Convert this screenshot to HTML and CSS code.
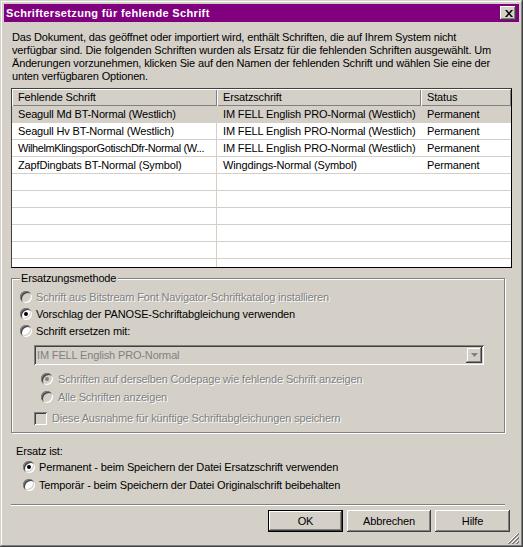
FILE: index.html
```html
<!doctype html>
<html lang="de">
  <head>
    <meta charset="UTF-8" />
    <title>Schriftersetzung für fehlende Schrift</title>
    <link rel="stylesheet" href="styles.css">
  </head>
  <body>
    <div class="window">
      <div class="titlebar">
        <span class="title">Schriftersetzung für fehlende Schrift</span>
        <div class="close">
          <svg width="8" height="7" viewBox="0 0 8 7">
            <path d="M0 0h2l2 2.5 2-2.5h2l-3 3.5 3 3.5h-2l-2-2.5-2 2.5h-2l3-3.5z" fill="#000" />
          </svg>
        </div>
      </div>

      <div class="content">
        <p class="intro">
          Das Dokument, das geöffnet oder importiert wird, enthält Schriften, die auf Ihrem System nicht<br>
          verfügbar sind. Die folgenden Schriften wurden als Ersatz für die fehlenden Schriften ausgewählt. Um<br>
          Änderungen vorzunehmen, klicken Sie auf den Namen der fehlenden Schrift und wählen Sie eine der<br>
          unten verfügbaren Optionen.
        </p>

        <div class="list">
          <div class="row head">
            <div class="cell">Fehlende Schrift</div>
            <div class="cell">Ersatzschrift</div>
            <div class="cell">Status</div>
          </div>
          <div class="row selected">
            <div class="cell">Seagull Md BT-Normal (Westlich)</div>
            <div class="cell">IM FELL English PRO-Normal (Westlich)</div>
            <div class="cell">Permanent</div>
          </div>
          <div class="row">
            <div class="cell">Seagull Hv BT-Normal (Westlich)</div>
            <div class="cell">IM FELL English PRO-Normal (Westlich)</div>
            <div class="cell">Permanent</div>
          </div>
          <div class="row">
            <div class="cell tight">WilhelmKlingsporGotischDfr-Normal (W...</div>
            <div class="cell">IM FELL English PRO-Normal (Westlich)</div>
            <div class="cell">Permanent</div>
          </div>
          <div class="row">
            <div class="cell">ZapfDingbats BT-Normal (Symbol)</div>
            <div class="cell">Wingdings-Normal (Symbol)</div>
            <div class="cell">Permanent</div>
          </div>
          <div class="row"><div class="cell"></div><div class="cell"></div><div class="cell"></div></div>
          <div class="row"><div class="cell"></div><div class="cell"></div><div class="cell"></div></div>
          <div class="row"><div class="cell"></div><div class="cell"></div><div class="cell"></div></div>
          <div class="row"><div class="cell"></div><div class="cell"></div><div class="cell"></div></div>
          <div class="row"><div class="cell"></div><div class="cell"></div><div class="cell"></div></div>
          <div class="row"><div class="cell"></div><div class="cell"></div><div class="cell"></div></div>
        </div>

        <fieldset class="group">
          <legend>Ersatzungsmethode</legend>
          <div class="option disabled">
            <span class="radio"></span>
            <span class="label">Schrift aus Bitstream Font Navigator-Schriftkatalog installieren</span>
          </div>
          <div class="option">
            <span class="radio"><span class="dot"></span></span>
            <span class="label">Vorschlag der PANOSE-Schriftabgleichung verwenden</span>
          </div>
          <div class="option">
            <span class="radio"></span>
            <span class="label">Schrift ersetzen mit:</span>
          </div>

          <div class="combo">
            <span class="combo-text">IM FELL English PRO-Normal</span>
            <span class="combo-btn">
              <svg width="7" height="4" viewBox="0 0 7 4">
                <path d="M0 0h7l-3.5 4z" fill="#808080" />
              </svg>
            </span>
          </div>

          <div class="option sub disabled">
            <span class="radio"><span class="dot"></span></span>
            <span class="label">Schriften auf derselben Codepage wie fehlende Schrift anzeigen</span>
          </div>
          <div class="option sub disabled">
            <span class="radio"></span>
            <span class="label">Alle Schriften anzeigen</span>
          </div>
          <div class="option check disabled">
            <span class="checkbox"></span>
            <span class="label">Diese Ausnahme für künftige Schriftabgleichungen speichern</span>
          </div>
        </fieldset>

        <div class="ersatz">
          <p class="ersatz-title">Ersatz ist:</p>
          <div class="option">
            <span class="radio"><span class="dot"></span></span>
            <span class="label">Permanent - beim Speichern der Datei Ersatzschrift verwenden</span>
          </div>
          <div class="option">
            <span class="radio"></span>
            <span class="label">Temporär - beim Speichern der Datei Originalschrift beibehalten</span>
          </div>
        </div>

        <div class="separator"></div>

        <div class="buttons">
          <div class="btn default">OK</div>
          <div class="btn wide">Abbrechen</div>
          <div class="btn">Hilfe</div>
        </div>
      </div>

      <svg class="grip" width="12" height="12" viewBox="0 0 12 12">
        <path d="M11 1L1 11M11 5L5 11M11 9L9 11" stroke="#fff" stroke-width="1" />
        <path d="M12 1L1 12M12 2L2 12M12 5L5 12M12 6L6 12M12 9L9 12M12 10L10 12" stroke="#808080" stroke-width="1" />
      </svg>
    </div>
  </body>
</html>
```

FILE: styles.css
```css
body {
  margin: 0;
  background: #d4d0c8;
  font-family: 'Liberation Sans', Arial, sans-serif;
  font-size: 11px;
  letter-spacing: -0.15px;
  color: #000;
}
.window {
  width: 523px;
  height: 547px;
  box-sizing: border-box;
  padding: 4px;
  background: #d4d0c8;
  box-shadow: inset -1px -1px #404040, inset 1px 1px #d4d0c8,
    inset -2px -2px #808080, inset 2px 2px #fff;
  display: flex;
  flex-direction: column;
  position: relative;
}
.titlebar {
  height: 18px;
  background: #800080;
  display: flex;
  align-items: center;
  justify-content: space-between;
  padding: 0 3px 0 2px;
}
.title {
  color: #fff;
  font-weight: bold;
  font-size: 11px;
  letter-spacing: 0.35px;
}
.close {
  width: 16px;
  height: 14px;
  background: #d4d0c8;
  box-shadow: inset -1px -1px #404040, inset 1px 1px #fff,
    inset -2px -2px #808080, inset 2px 2px #d4d0c8;
  display: flex;
  align-items: center;
  justify-content: center;
  padding-left: 1px;
  box-sizing: border-box;
}
.content {
  padding: 0 7px;
  display: flex;
  flex-direction: column;
}
.intro {
  margin: 9px 0 5px;
  padding-left: 1px;
  line-height: 13px;
}
.list {
  height: 180px;
  box-sizing: border-box;
  border: 1px solid #000;
  border-top-color: #404040;
  border-left-color: #404040;
  background: #fff;
  overflow: hidden;
}
.row {
  display: grid;
  grid-template-columns: 205px 204px 1fr;
  height: 17px;
  box-sizing: border-box;
  border-bottom: 1px solid #d4d0c8;
}
.cell {
  padding-left: 6px;
  line-height: 16px;
  white-space: nowrap;
  overflow: hidden;
}
.cell.tight {
  letter-spacing: -0.4px;
}
.row .cell:first-child {
  border-right: 1px solid #d4d0c8;
}
.row.head {
  border-bottom: none;
}
.row.head .cell {
  background: #d4d0c8;
  border-right: none;
  box-shadow: inset 1px 1px #fff, inset -1px -1px #808080;
}
.row.selected {
  background: #d4d0c8;
}
.group {
  margin: 4px 7px 0 0;
  padding: 3px 8px 5px;
  border: 1px solid #808080;
  box-shadow: inset 1px 1px #fff, 1px 1px #fff;
  min-width: 0;
}
.group legend {
  padding: 0 2px 0 1px;
  margin-left: 0;
  line-height: 13px;
  background: #d4d0c8;
}
.option {
  display: flex;
  align-items: center;
  gap: 4px;
  height: 17px;
}
.option.sub {
  height: 18px;
  padding-left: 21px;
  gap: 5px;
}
.option.check {
  height: 18px;
  margin-top: 3px;
  padding-left: 14px;
  gap: 5px;
}
.radio {
  width: 12px;
  height: 12px;
  flex: none;
  border-radius: 50%;
  background: #fff;
  box-shadow: inset 1px 1px #808080, inset -1px -1px #fff,
    inset 2px 2px #404040, inset -2px -2px #d4d0c8;
  display: flex;
  align-items: center;
  justify-content: center;
}
.dot {
  width: 4px;
  height: 4px;
  border-radius: 50%;
  background: #000;
}
.checkbox {
  width: 13px;
  height: 13px;
  flex: none;
  background: #fff;
  box-shadow: inset 1px 1px #808080, inset -1px -1px #fff,
    inset 2px 2px #404040, inset -2px -2px #d4d0c8;
}
.disabled .radio,
.disabled .checkbox {
  background: #d4d0c8;
}
.disabled .dot {
  background: #808080;
}
.disabled .label {
  color: #808080;
  text-shadow: 1px 1px #fff;
}
.combo {
  margin: 6px 12px 5px 14px;
  height: 20px;
  box-sizing: border-box;
  background: #d4d0c8;
  box-shadow: inset 1px 1px #808080, inset -1px -1px #fff,
    inset 2px 2px #404040, inset -2px -2px #d4d0c8;
  display: flex;
  align-items: center;
  justify-content: space-between;
  padding: 2px;
}
.combo-text {
  color: #808080;
  padding-left: 1px;
}
.combo-btn {
  width: 16px;
  height: 16px;
  box-sizing: border-box;
  background: #d4d0c8;
  box-shadow: inset -1px -1px #404040, inset 1px 1px #d4d0c8,
    inset -2px -2px #808080, inset 2px 2px #fff;
  display: flex;
  align-items: center;
  justify-content: center;
}
.ersatz {
  margin-top: 12px;
}
.ersatz-title {
  margin: 0;
  padding-left: 5px;
  line-height: 13px;
}
.ersatz .option {
  height: 18px;
  padding-left: 12px;
}
.separator {
  margin: 10px 7px 0 0;
  height: 1px;
  background: #808080;
  border-bottom: 1px solid #fff;
}
.buttons {
  display: flex;
  justify-content: flex-end;
  gap: 4px;
  margin: 4px 2px 0 0;
}
.btn {
  width: 75px;
  height: 22px;
  box-sizing: border-box;
  display: flex;
  align-items: center;
  justify-content: center;
  box-shadow: inset -1px -1px #404040, inset 1px 1px #fff,
    inset -2px -2px #808080, inset 2px 2px #d4d0c8;
}
.btn.wide {
  width: 84px;
}
.btn.default {
  box-shadow: inset 0 0 0 1px #000, inset -2px -2px #404040,
    inset 2px 2px #fff, inset -3px -3px #808080;
}
.grip {
  position: absolute;
  right: 4px;
  bottom: 3px;
}
```
